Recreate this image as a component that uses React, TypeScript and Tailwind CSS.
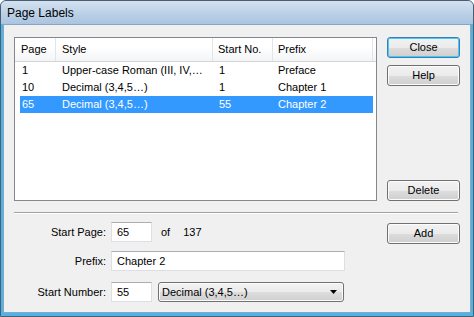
import React from "react";

const rows = [
  { page: "1", style: "Upper-case Roman (III, IV,…", start: "1", prefix: "Preface" },
  { page: "10", style: "Decimal (3,4,5…)", start: "1", prefix: "Chapter 1" },
  { page: "65", style: "Decimal (3,4,5…)", start: "55", prefix: "Chapter 2", selected: true },
];

const gray = "bg-[linear-gradient(#f2f2f2,#ebebeb_50%,#dddddd_51%,#cfcfcf)]";

const input =
  "h-[20px] border border-[#dbdfe6] border-t-[#abadb3] bg-white pl-[5px] flex items-center";

function Button({ label, focused }: { label: string; focused?: boolean }) {
  return (
    <div
      className={
        "h-[21px] w-[73px] rounded-[3px] border text-black flex items-center justify-center " +
        gray +
        (focused
          ? " border-[#3c7fb1] shadow-[inset_0_0_0_1px_#48c8f6]"
          : " border-[#707070] shadow-[inset_0_0_0_1px_#fcfcfc]")
      }
    >
      {label}
    </div>
  );
}

export default function App() {
  return (
    <div className="w-[474px] h-[317px] flex flex-col rounded-t-[6px] border border-[#4b5d70] bg-[#4bb5ea] overflow-hidden font-['Liberation_Sans',Arial,sans-serif] text-[11px] text-black leading-none">
      {/* title bar */}
      <div className="h-[23px] shrink-0 flex items-center pl-[6px] bg-[linear-gradient(#d3e1f0,#b9cfe6_60%,#aac4e0)] text-[12px] text-black">
        Page Labels
      </div>

      {/* body */}
      <div className="flex-1 px-[2px] pb-[3px] flex flex-col">
        <div className="flex-1 flex flex-col bg-[#f0f0f0] border border-[#8aa5bf]">
          {/* list + buttons */}
          <div className="flex gap-[10px] pt-[12px] pl-[10px]">
            <div className="w-[363px] h-[164px] border border-[#828790] bg-white flex flex-col">
              <div className="h-[24px] flex border-b border-[#d5d5d5] bg-[linear-gradient(#ffffff,#ffffff_40%,#f3f4f6)]">
                <div className="w-[41px] pl-[6px] flex items-center border-r border-[#e3e4e8]">Page</div>
                <div className="w-[157px] pl-[6px] flex items-center border-r border-[#e3e4e8]">Style</div>
                <div className="w-[60px] pl-[5px] flex items-center border-r border-[#e3e4e8]">Start No.</div>
                <div className="w-[100px] pl-[5px] flex items-center border-r border-[#e3e4e8]">Prefix</div>
              </div>
              <div className="pl-[5px] pr-[3px]">
                {rows.map((r) => (
                  <div
                    key={r.page}
                    className={
                      "h-[17px] flex items-center " + (r.selected ? "bg-[#3399ff] text-white" : "")
                    }
                  >
                    <div className="w-[35px] pl-[2px]">{r.page}</div>
                    <div className="w-[157px] pl-[7px] whitespace-nowrap">{r.style}</div>
                    <div className="w-[60px] pl-[7px]">{r.start}</div>
                    <div className="pl-[6px]">{r.prefix}</div>
                  </div>
                ))}
              </div>
            </div>

            <div className="w-[73px] flex flex-col">
              <Button label="Close" focused />
              <div className="mt-[7px]">
                <Button label="Help" />
              </div>
              <div className="mt-auto">
                <Button label="Delete" />
              </div>
            </div>
          </div>

          {/* separator */}
          <div className="mt-[11px] ml-[10px] mr-[12px] h-[2px] border-t border-[#a0a0a0] border-b border-b-white" />

          {/* form */}
          <div className="flex gap-[10px] px-[10px]">
            <div className="w-[363px] flex flex-col pt-[8px]">
              <div className="flex items-center">
                <div className="w-[92px] text-right">Start Page:</div>
                <div className={input + " ml-[5px] w-[41px]"}>65</div>
                <div className="ml-[9px]">of</div>
                <div className="ml-[13px]">137</div>
              </div>
              <div className="flex items-center mt-[9px]">
                <div className="w-[92px] text-right">Prefix:</div>
                <div className={input + " ml-[5px] w-[234px]"}>Chapter 2</div>
              </div>
              <div className="flex items-center mt-[11px]">
                <div className="w-[92px] text-right">Start Number:</div>
                <div className={input + " ml-[5px] w-[41px]"}>55</div>
                <div className={"ml-[6px] w-[186px] h-[20px] rounded-[3px] border border-[#707070] shadow-[inset_0_0_0_1px_#fcfcfc] flex items-center pl-[3px] pr-[6px] " + gray}>
                  <span className="flex-1">Decimal (3,4,5…)</span>
                  <svg width="7" height="4" viewBox="0 0 7 4">
                    <path d="M0 0H7L3.5 4Z" fill="#000" />
                  </svg>
                </div>
              </div>
            </div>
            <div className="w-[73px] pt-[9px]">
              <Button label="Add" />
            </div>
          </div>
        </div>
      </div>
    </div>
  );
}
